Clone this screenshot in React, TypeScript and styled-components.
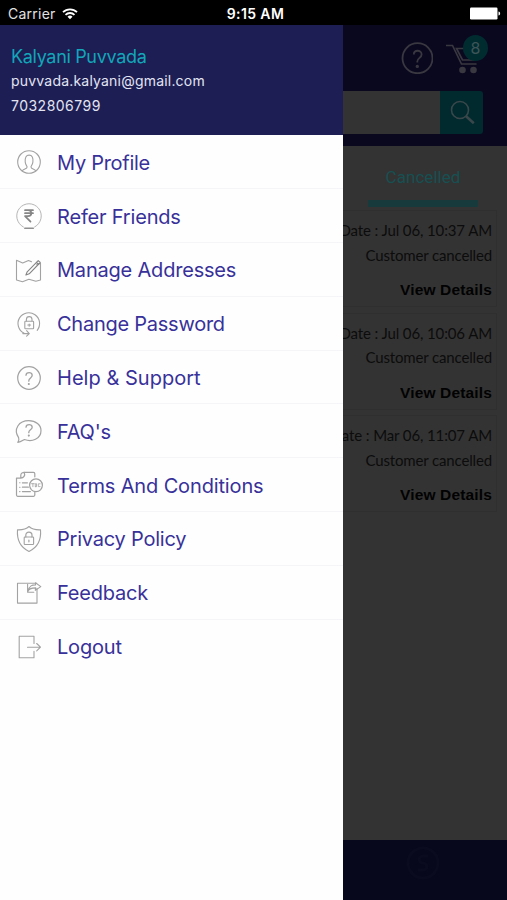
import React from "react";
import styled, { createGlobalStyle } from "styled-components";

const GlobalStyle = createGlobalStyle`
  * { box-sizing: border-box; }
  body { margin: 0; background: #000; overflow: hidden; }
`;

const Screen = styled.div`
  width: 507px;
  height: 900px;
  display: flex;
  flex-direction: column;
  overflow: hidden;
  font-family: Inter, "Liberation Sans", sans-serif;
`;

const StatusBar = styled.header`
  height: 25px;
  flex: none;
  display: grid;
  grid-template-columns: 1fr auto 1fr;
  align-items: center;
  padding: 3px 6px 0 8px;
  background: #000;
  color: #fff;
`;

const Carrier = styled.div`
  display: flex;
  align-items: center;
  gap: 6px;
  font-size: 14px;
  line-height: 20px;
  letter-spacing: 0.24px;
  color: #e2e2e2;
`;

const Clock = styled.div`
  font-size: 14px;
  line-height: 20px;
  font-weight: 600;
  letter-spacing: 0.4px;
  margin-left: 2px;
`;

const BatterySlot = styled.div`
  display: flex;
  justify-content: flex-end;
  padding-bottom: 2px;
`;

const Body = styled.div`
  flex: 1;
  display: flex;
  min-height: 0;
`;

const Drawer = styled.aside`
  width: 343px;
  flex: none;
  background: #fefefe;
`;

const Account = styled.div`
  height: 110px;
  padding: 20px 11px 0;
  background: #1c1e54;
`;

const AccountName = styled.div<{ $track: number }>`
  font-size: 18px;
  line-height: 24px;
  letter-spacing: ${(p) => p.$track}px;
  color: #13a6b9;
`;

const AccountLine = styled.div<{ $track: number }>`
  font-size: 14px;
  line-height: 24.5px;
  letter-spacing: ${(p) => p.$track}px;
  color: #e3e4f2;
`;

const Menu = styled.nav`
  display: flex;
  flex-direction: column;
  padding-top: 0.5px;
`;

const MenuItem = styled.a`
  height: 53.8px;
  display: flex;
  align-items: center;
  border-bottom: 1px solid #f5f5f7;
  &:last-child { border-bottom-color: transparent; }
`;

const MenuIcon = styled.span`
  width: 57px;
  padding: 1px 0 0 14px;
  display: flex;
  svg {
    display: block;
    overflow: visible;
    fill: none;
    stroke: #a2a2a2;
    stroke-width: 1.1;
    stroke-linejoin: round;
    stroke-linecap: round;
  }
`;

const MenuLabel = styled.span<{ $track: number }>`
  font-size: 20px;
  line-height: 26px;
  padding-top: 2px;
  letter-spacing: ${(p) => p.$track}px;
  color: #38319a;
  white-space: nowrap;
`;

const Orders = styled.main`
  width: 164px;
  display: flex;
  flex-direction: column;
  overflow: hidden;
  background: #333;
`;

const TopBar = styled.div`
  height: 121px;
  flex: none;
  background: #0a081f;
`;

const Actions = styled.div`
  height: 66px;
  display: flex;
  align-items: center;
  padding-left: 58px;
  gap: 13px;
`;

const HelpButton = styled.button`
  width: 32px;
  height: 32px;
  padding: 0;
  border: 0;
  background: none;
  svg { display: block; }
`;

const Cart = styled.div`
  position: relative;
  width: 42px;
  height: 46px;
  svg { display: block; }
`;

const Badge = styled.span`
  position: absolute;
  left: 17px;
  top: 0;
  width: 25px;
  height: 26px;
  border-radius: 50%;
  background: #002c30;
  color: #3d5558;
  font-size: 16px;
  line-height: 27px;
  text-align: center;
`;

const Search = styled.div`
  width: 139.5px;
  height: 43px;
  display: flex;
  border-radius: 0 3px 3px 0;
  overflow: hidden;
`;

const SearchField = styled.div`
  width: 97px;
  background: #333;
`;

const SearchButton = styled.button`
  width: 43px;
  padding: 0;
  border: 0;
  background: #002a2e;
  svg { display: block; }
`;

const Tab = styled.div`
  width: 110px;
  height: 61px;
  margin-left: 25px;
  flex: none;
  padding-top: 19px;
  border-bottom: 7px solid #173b3c;
  color: #165052;
  font-family: Roboto, sans-serif;
  font-size: 17px;
  line-height: 24px;
  letter-spacing: 0.05px;
  text-align: center;
`;

const OrderList = styled.div`
  flex: 1;
  display: flex;
  flex-direction: column;
  gap: 5.5px;
  padding: 3px 10px 0 0;
`;

const OrderCard = styled.article`
  height: 97px;
  padding: 7px 4px 0 0;
  display: flex;
  flex-direction: column;
  align-items: flex-end;
  border: 1px solid #2f2f2f;
  border-left: 0;
  font-family: Lato, sans-serif;
  font-size: 15px;
  color: #0c0c0c;
  white-space: nowrap;
`;

const OrderLine = styled.div<{ $track: number }>`
  height: 24.5px;
  line-height: 24px;
  letter-spacing: ${(p) => p.$track}px;
`;

const DetailsLink = styled.a`
  margin-top: 11px;
  font-family: "Liberation Sans", sans-serif;
  font-weight: 700;
  font-size: 15.5px;
  line-height: 24px;
  letter-spacing: 0.15px;
  color: #020202;
`;

const BottomBar = styled.footer`
  height: 60px;
  flex: none;
  display: flex;
  justify-content: center;
  padding: 4px 5px 0 0;
  background: #08081c;
`;

const icons = {
  profile: (
    <>
      <circle cx="15" cy="15" r="11.3" />
      <path d="M8.3 24c1-2.3 4.8-1.6 4.8-4 0-1.2-1.7-2-1.9-5.1-.3-4.3.8-6.8 3.9-6.8s4.2 2.5 3.8 6.8c-.3 3.1-1.9 3.9-1.9 5.1 0 2.4 3.7 1.7 4.7 4" />
    </>
  ),
  rupee: (
    <>
      <path d="M9.4 26A12.3 12.3 0 1 1 20.6 26" strokeWidth=".8" />
      <path d="M11 9.2h8M11 12.2h8M11 9.2h3c4.6 0 4.3 5.9 0 5.9h-3l5.5 5.5" stroke="#858585" strokeWidth="1.7" />
      <path d="M10.8 27.3h8.5" stroke="#909090" strokeWidth="1.6" />
    </>
  ),
  map: (
    <>
      <path d="M22.5 9.2l4-.8V25l-4.6 1.2-7-2-6.4 2.5L2.5 25V5.3L8.7 8l5.8-2.4 3 1.1" />
      <path d="M13.2 16.8l11-11.2 2 1.9-11 11.3-3.3 1.2z" stroke="#858585" strokeWidth="1.1" />
      <path d="M22.5 7.4l2 2" stroke="#858585" />
    </>
  ),
  password: (
    <>
      <path d="M9.8 24.1A10.8 10.8 0 1 1 23.2 21.3" />
      <path d="M8.8 24.6h6.5M12.6 21.7l2.7 2.9-2.7 2.5" />
      <rect x="10.8" y="12.2" width="8.8" height="7.5" rx=".7" />
      <path d="M12.4 12v-1.6a2.8 2.8 0 0 1 5.6 0V12M15.2 15v2.2M13.8 16h2.8" />
    </>
  ),
  help: (
    <>
      <circle cx="15" cy="15" r="11.3" strokeWidth="1.2" />
      <path d="M12 12.3c.2-3.6 6.2-3.6 6.2 0 0 2.6-3.4 2.6-3.4 5.4v.5" strokeWidth="1.3" />
      <circle cx="14.8" cy="21" r=".5" fill="#888" />
    </>
  ),
  faq: (
    <>
      <path d="M3.8 26.4c1.3-1.6 1.4-3.1.8-4.8-5.6-8.5.2-16.9 10.2-16.9 7 0 12.2 4.1 12.2 9.8 0 8.7-9.2 11.8-16.6 9-2 1.1-4 2.4-6.6 2.9z" strokeWidth="1.2" />
      <path d="M12 11.2c.2-3.5 6.2-3.5 6.2 0 0 2.6-3.4 2.6-3.4 5.1v.4" strokeWidth="1.3" />
      <circle cx="14.8" cy="19.6" r=".5" fill="#888" />
    </>
  ),
  terms: (
    <>
      <path d="M6.8 8.2v-3c0-1.9 2-2.9 3.5-2.9h9.2c1 0 1.3.7 1.3 1.4v3.1M10.2 2.4c1.4 3-.6 5.7-3.4 5.7H2.5v17c0 .8.4 1.2 1.1 1.2h16c.8 0 1.2-.4 1.2-1.2v-2.8" strokeWidth="1.2" />
      <path d="M8.4 12.8h5M8.4 17.2h6M8.4 21.6h8" strokeWidth="1.2" />
      <path d="M5.6 12.8h.4M5.6 17.2h.4M5.6 21.6h.4" />
      <circle cx="22" cy="15.3" r="6.4" strokeWidth="1.2" />
      <path d="M17.5 13.7h2.8M18.9 13.7v3M21.3 16.7v-3h1.2v3h-1M26.1 13.8h-1.8v2.8h1.8" strokeWidth=".8" />
    </>
  ),
  privacy: (
    <>
      <path d="M15 2.5c2.8 2.6 7 3.5 11.5 3.3.8 9.3-2.5 17.4-11.5 21.7C6 23.2 2.8 15.1 3.5 5.8 8 6 12.2 5.1 15 2.5z" />
      <rect x="10.2" y="13" width="9.4" height="7.5" rx=".8" />
      <path d="M11.8 12.9v-1.7a3.1 3.1 0 0 1 6.2 0v1.7M14.9 16v1.8" strokeWidth="1.2" />
    </>
  ),
  feedback: (
    <>
      <path d="M23 10.2v14.9H3.5V5.3h18.8" />
      <path d="M13.6 6.2v8h6.2M13.7 13.9c.9-3.6 4.2-4 8-4l-.4 2.5 5.5-3.8-5.3-3.8v2.1c-3.5 0-5.8.5-7.9 6.7z" />
    </>
  ),
  logout: (
    <>
      <path d="M20 11.4V4.2H5.2v21.5H20v-6.5" />
      <path d="M13.5 15.2h12.8M22.7 11.5l3.8 3.7-3.8 3.7" />
    </>
  ),
};

const entries: { label: string; icon: keyof typeof icons; track: number }[] = [
  { label: "My Profile", icon: "profile", track: -0.28 },
  { label: "Refer Friends", icon: "rupee", track: -0.18 },
  { label: "Manage Addresses", icon: "map", track: -0.2 },
  { label: "Change Password", icon: "password", track: -0.25 },
  { label: "Help & Support", icon: "help", track: 0.03 },
  { label: "FAQ's", icon: "faq", track: -0.25 },
  { label: "Terms And Conditions", icon: "terms", track: -0.14 },
  { label: "Privacy Policy", icon: "privacy", track: -0.22 },
  { label: "Feedback", icon: "feedback", track: -0.2 },
  { label: "Logout", icon: "logout", track: -0.2 },
];

const orders = ["Jul 06, 10:37 AM", "Jul 06, 10:06 AM", "Mar 06, 11:07 AM"];

export default function App() {
  return (
    <>
      <GlobalStyle />
      <Screen>
        <StatusBar>
          <Carrier>
            Carrier
            <svg width="16" height="12" viewBox="0 0 16 12" fill="none" stroke="#fff" strokeWidth="1.8">
              <path d="M1 4.2a10 10 0 0 1 14 0M3.5 6.8a6.5 6.5 0 0 1 9 0" />
              <path d="M5.5 8.8a3.6 3.6 0 0 1 5 0L8 11.3z" fill="#fff" stroke="none" />
            </svg>
          </Carrier>
          <Clock>9:15 AM</Clock>
          <BatterySlot>
            <svg width="31" height="13" viewBox="0 0 31 13" fill="#fff">
              <rect x="0" y="0.5" width="27.5" height="12" rx="1.2" />
              <path d="M28.5 4.5c2.2.5 2.2 3.5 0 4z" />
            </svg>
          </BatterySlot>
        </StatusBar>
        <Body>
          <Drawer>
            <Account>
              <AccountName $track={-0.33}>Kalyani Puvvada</AccountName>
              <AccountLine $track={0.2}>puvvada.kalyani@gmail.com</AccountLine>
              <AccountLine $track={0.48}>7032806799</AccountLine>
            </Account>
            <Menu>
              {entries.map((e) => (
                <MenuItem key={e.label}>
                  <MenuIcon>
                    <svg width="30" height="30" viewBox="0 0 30 30">{icons[e.icon]}</svg>
                  </MenuIcon>
                  <MenuLabel $track={e.track}>{e.label}</MenuLabel>
                </MenuItem>
              ))}
            </Menu>
          </Drawer>
          <Orders>
            <TopBar>
              <Actions>
                <HelpButton aria-label="Help">
                  <svg width="32" height="32" viewBox="0 0 32 32" fill="none" stroke="#39373f" strokeWidth="1.8">
                    <circle cx="16.5" cy="16.2" r="15" />
                    <path d="M12.8 12.5c0-5 7.8-5 7.8 0 0 3.4-4.3 3.4-4.3 7.1v1" />
                    <circle cx="16.3" cy="24.4" r=".8" fill="#39373f" />
                  </svg>
                </HelpButton>
                <Cart>
                  <svg width="42" height="46" viewBox="0 0 42 46" fill="none" stroke="#39373f" strokeWidth="1.7">
                    <path d="M0 10.5h6.5L15.5 29h15" />
                    <path d="M21 13.5H10.5l6 11.5H28l4-6" />
                    <circle cx="16.5" cy="35" r="3.3" fill="#39373f" stroke="none" />
                    <circle cx="27.5" cy="35" r="3.3" fill="#39373f" stroke="none" />
                  </svg>
                  <Badge>8</Badge>
                </Cart>
              </Actions>
              <Search>
                <SearchField />
                <SearchButton aria-label="Search">
                  <svg width="43" height="43" viewBox="0 0 43 43" fill="none" stroke="#39474a">
                    <circle cx="20" cy="19" r="8.5" strokeWidth="1.6" />
                    <path d="M25.8 25l8 7.2" strokeWidth="2.6" />
                  </svg>
                </SearchButton>
              </Search>
            </TopBar>
            <Tab>Cancelled</Tab>
            <OrderList>
              {orders.map((date) => (
                <OrderCard key={date}>
                  <OrderLine $track={-0.12}>Date : {date}</OrderLine>
                  <OrderLine $track={-0.15}>Customer cancelled</OrderLine>
                  <DetailsLink>View Details</DetailsLink>
                </OrderCard>
              ))}
            </OrderList>
            <BottomBar>
              <svg width="36" height="38" viewBox="0 0 36 38" fill="none" stroke="#0b0b1f" strokeWidth="3">
                <circle cx="18" cy="19" r="15" />
                <path d="M23 12h-5c-5 0-5 7 0 7s5 7 0 7h-5" />
              </svg>
            </BottomBar>
          </Orders>
        </Body>
      </Screen>
    </>
  );
}
